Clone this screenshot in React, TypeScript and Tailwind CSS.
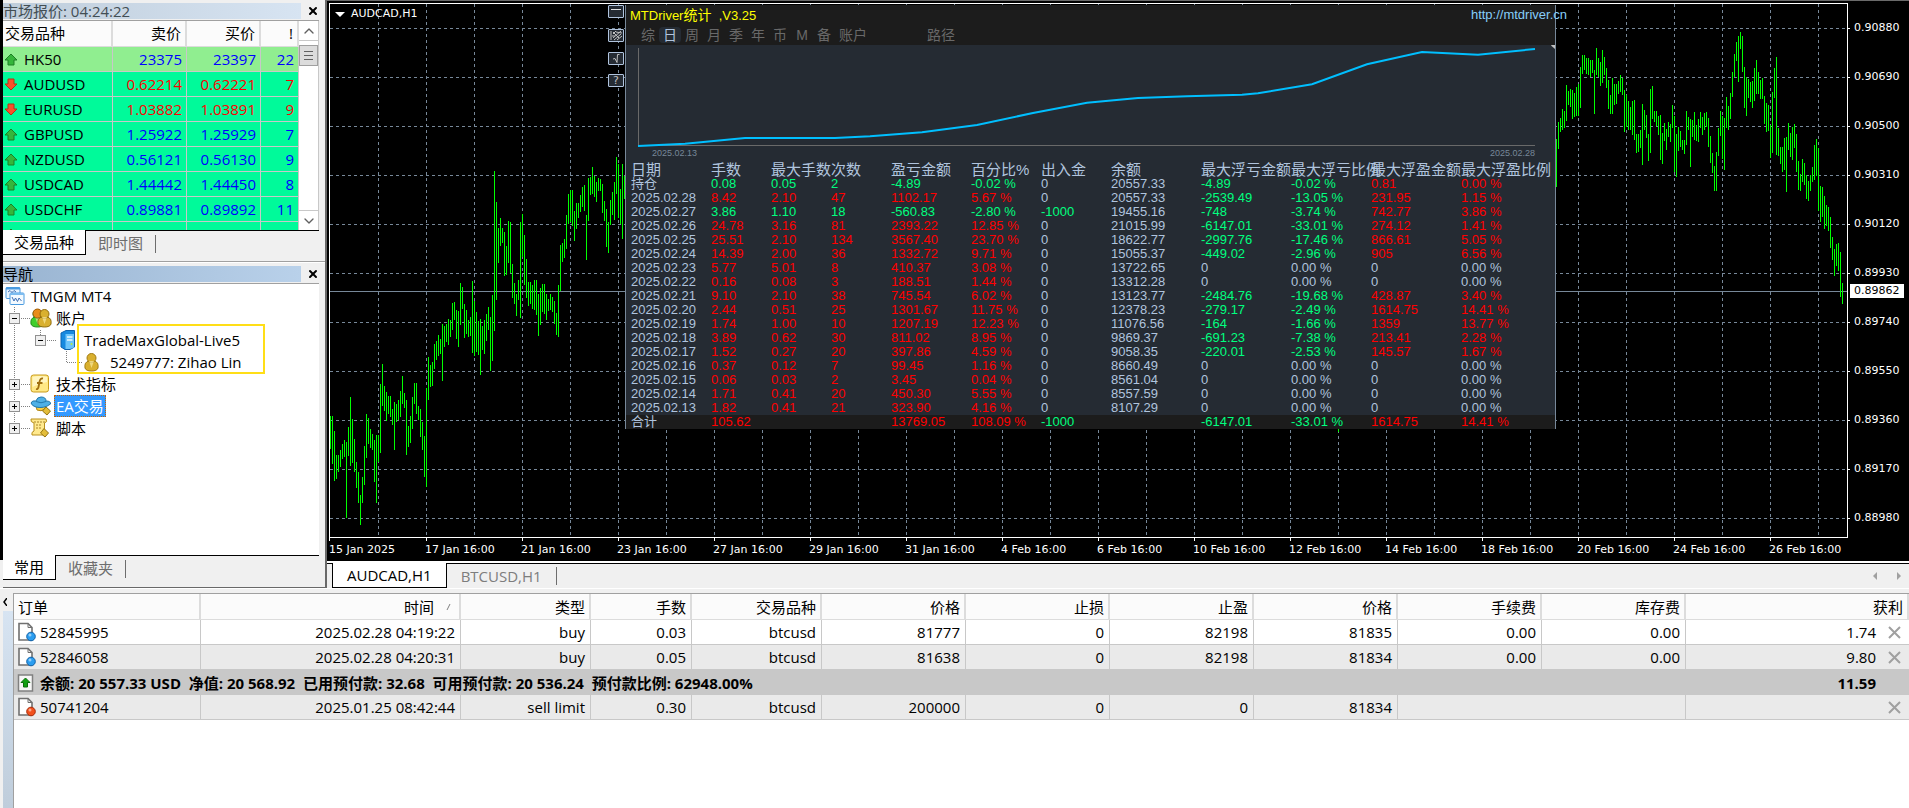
import type { ReactNode } from 'react';
import { ChevronDown, ChevronUp, X } from 'lucide-react';

const quotes = [
  { symbol: 'HK50', bid: '23375', ask: '23397', spread: 22, up: true },
  { symbol: 'AUDUSD', bid: '0.62214', ask: '0.62221', spread: 7, up: false },
  { symbol: 'EURUSD', bid: '1.03882', ask: '1.03891', spread: 9, up: false },
  { symbol: 'GBPUSD', bid: '1.25922', ask: '1.25929', spread: 7, up: true },
  { symbol: 'NZDUSD', bid: '0.56121', ask: '0.56130', spread: 9, up: true },
  { symbol: 'USDCAD', bid: '1.44442', ask: '1.44450', spread: 8, up: true },
  { symbol: 'USDCHF', bid: '0.89881', ask: '0.89892', spread: 11, up: true },
  { symbol: 'USDJPY', bid: '149.808', ask: '149.818', spread: 10, up: true },
];

const prices = [
  '0.90880', '0.90690', '0.90500', '0.90310', '0.90120', '0.89930',
  '0.89740', '0.89550', '0.89360', '0.89170', '0.88980',
];

const times = [
  '15 Jan 2025', '17 Jan 16:00', '21 Jan 16:00', '23 Jan 16:00',
  '27 Jan 16:00', '29 Jan 16:00', '31 Jan 16:00', '4 Feb 16:00',
  '6 Feb 16:00', '10 Feb 16:00', '12 Feb 16:00', '14 Feb 16:00',
  '18 Feb 16:00', '20 Feb 16:00', '24 Feb 16:00', '26 Feb 16:00',
];

// high/low of each bar, counted down from the top of the chart
const januaryBars = [
  [1125, 1214], [1125, 1254], [1165, 1300], [1230, 1295], [1230, 1275], [1217, 1262], [1200, 1240], [1190, 1235],
  [1195, 1400], [1155, 1233], [1073, 1260], [1133, 1252], [1187, 1276], [1250, 1318], [1276, 1360], [1338, 1418],
  [1290, 1360], [1206, 1310], [1119, 1238], [1130, 1200], [1160, 1210], [1173, 1216], [1190, 1302], [1176, 1360],
  [1176, 1250], [1038, 1225], [984, 1098], [1044, 1110], [1060, 1137], [1071, 1119], [1071, 1128], [1105, 1148],
  [1087, 1216], [1092, 1140], [1081, 1136], [1057, 1127], [1016, 1092], [1062, 1103], [1080, 1230], [1152, 1208],
  [1125, 1198], [1073, 1160], [1035, 1092], [1035, 1119], [1098, 1135], [1106, 1181], [1141, 1216], [1179, 1290],
  [1048, 1316], [965, 1081], [987, 1046], [979, 1044], [930, 998], [922, 973], [906, 963], [916, 957],
  [876, 1030], [881, 938], [876, 925], [862, 933], [865, 911], [819, 892], [816, 865], [838, 916],
  [841, 938], [765, 879], [776, 835], [822, 914], [838, 903], [865, 911], [857, 908], [760, 954],
  [814, 962], [843, 952], [868, 960], [862, 1014], [881, 946], [865, 957], [849, 922], [830, 892],
  [857, 1003], [798, 976], [462, 895], [546, 811], [616, 711], [589, 665], [616, 657], [627, 746],
  [665, 743], [597, 711], [600, 738], [714, 806], [765, 822], [795, 854], [757, 811], [600, 860],
  [579, 696], [635, 770], [700, 806], [762, 827], [762, 822], [770, 835], [757, 838], [757, 852],
  [795, 908], [779, 879], [768, 843], [768, 849], [795, 865], [808, 841], [795, 838], [803, 843],
  [814, 876], [846, 906], [770, 911], [662, 787], [657, 708], [646, 697], [581, 673], [524, 606],
  [514, 600], [514, 611], [570, 652], [549, 619], [549, 589], [527, 573], [506, 560], [500, 570],
  [581, 703], [481, 597], [479, 527], [451, 524], [476, 533], [492, 546], [481, 516], [484, 516],
  [497, 576], [543, 597], [565, 668], [600, 684], [541, 608], [519, 581], [492, 595], [424, 524],
  [443, 589], [511, 606], [443, 646], [476, 538],
];

const februaryBars = [
  [362, 489], [319, 389], [308, 345], [285, 339], [290, 335], [222, 316], [238, 274], [233, 279],
  [235, 311], [243, 306], [227, 303], [219, 303], [175, 282], [144, 193], [144, 183], [152, 193],
  [152, 196], [157, 201], [157, 191], [183, 298], [125, 196], [152, 201], [162, 225], [131, 217],
  [149, 196], [178, 230], [209, 285], [248, 298], [204, 298], [219, 274], [219, 272], [212, 245],
  [196, 240], [204, 248], [235, 345], [248, 332], [264, 340], [280, 340], [264, 353], [261, 366],
  [350, 400], [350, 397], [340, 387], [272, 431], [287, 340], [301, 361], [350, 421], [233, 400],
  [225, 311], [290, 319], [290, 329], [303, 353], [301, 418], [348, 429], [321, 368], [337, 392],
  [319, 358], [324, 371], [274, 335], [303, 450], [350, 463], [332, 395], [342, 384], [366, 392],
  [366, 402], [290, 379], [306, 340], [311, 436], [314, 358], [293, 366], [327, 368], [311, 371],
  [293, 335], [306, 353], [295, 340], [293, 332], [308, 384], [355, 426], [400, 452], [434, 499],
  [397, 499], [335, 408], [290, 355], [303, 416], [308, 444], [253, 335], [277, 340], [243, 311],
  [188, 253], [141, 201], [110, 160], [94, 214], [84, 128], [94, 188], [175, 282], [201, 303],
  [206, 256], [214, 266], [212, 282], [178, 264], [157, 246], [188, 246], [209, 258], [204, 258],
  [251, 324], [269, 345], [274, 342], [327, 413], [240, 400], [178, 256], [149, 405], [335, 408],
  [384, 429], [384, 450], [361, 444], [358, 502], [321, 392], [348, 410], [332, 418], [324, 387],
  [350, 450], [421, 497], [455, 499], [416, 476], [426, 484], [458, 520], [473, 526], [458, 499],
  [436, 476], [379, 471], [363, 460], [387, 551], [486, 580], [489, 567], [512, 599], [535, 591],
  [541, 604], [567, 648], [619, 680], [651, 721], [638, 695], [635, 709], [659, 776], [740, 795],
];

function barPath(bars: number[][], startX: number, pointsPerPixel: number) {
  return bars
    .map(([high, low], i) => {
      const x = startX + i * 2 + 0.5;
      return `M${x} ${Math.round(high / pointsPerPixel)}V${Math.round(low / pointsPerPixel)}`;
    })
    .join('');
}

const statColumns = [
  { title: '日期', width: 'w-[80px]' },
  { title: '手数', width: 'w-[60px]' },
  { title: '最大手数', width: 'w-[60px]' },
  { title: '次数', width: 'w-[60px]' },
  { title: '盈亏金额', width: 'w-[80px]' },
  { title: '百分比%', width: 'w-[70px]' },
  { title: '出入金', width: 'w-[70px]' },
  { title: '余额', width: 'w-[90px]' },
  { title: '最大浮亏金额', width: 'w-[90px]' },
  { title: '最大浮亏比例', width: 'w-[80px]' },
  { title: '最大浮盈金额', width: 'w-[90px]' },
  { title: '最大浮盈比例', width: '' },
];

const statRows = [
  ['持仓', '0.08', '0.05', '2', '-4.89', '-0.02 %', '0', '20557.33', '-4.89', '-0.02 %', '0.81', '0.00 %'],
  ['2025.02.28', '8.42', '2.10', '47', '1102.17', '5.67 %', '0', '20557.33', '-2539.49', '-13.05 %', '231.95', '1.15 %'],
  ['2025.02.27', '3.86', '1.10', '18', '-560.83', '-2.80 %', '-1000', '19455.16', '-748', '-3.74 %', '742.77', '3.86 %'],
  ['2025.02.26', '24.78', '3.16', '81', '2393.22', '12.85 %', '0', '21015.99', '-6147.01', '-33.01 %', '274.12', '1.41 %'],
  ['2025.02.25', '25.51', '2.10', '134', '3567.40', '23.70 %', '0', '18622.77', '-2997.76', '-17.46 %', '866.61', '5.05 %'],
  ['2025.02.24', '14.39', '2.00', '36', '1332.72', '9.71 %', '0', '15055.37', '-449.02', '-2.96 %', '905', '6.56 %'],
  ['2025.02.23', '5.77', '5.01', '8', '410.37', '3.08 %', '0', '13722.65', '0', '0.00 %', '0', '0.00 %'],
  ['2025.02.22', '0.16', '0.08', '3', '188.51', '1.44 %', '0', '13312.28', '0', '0.00 %', '0', '0.00 %'],
  ['2025.02.21', '9.10', '2.10', '38', '745.54', '6.02 %', '0', '13123.77', '-2484.76', '-19.68 %', '428.87', '3.40 %'],
  ['2025.02.20', '2.44', '0.51', '25', '1301.67', '11.75 %', '0', '12378.23', '-279.17', '-2.49 %', '1614.75', '14.41 %'],
  ['2025.02.19', '1.74', '1.00', '10', '1207.19', '12.23 %', '0', '11076.56', '-164', '-1.66 %', '1359', '13.77 %'],
  ['2025.02.18', '3.89', '0.62', '30', '811.02', '8.95 %', '0', '9869.37', '-691.23', '-7.38 %', '213.41', '2.28 %'],
  ['2025.02.17', '1.52', '0.27', '20', '397.86', '4.59 %', '0', '9058.35', '-220.01', '-2.53 %', '145.57', '1.67 %'],
  ['2025.02.16', '0.37', '0.12', '7', '99.45', '1.16 %', '0', '8660.49', '0', '0.00 %', '0', '0.00 %'],
  ['2025.02.15', '0.06', '0.03', '2', '3.45', '0.04 %', '0', '8561.04', '0', '0.00 %', '0', '0.00 %'],
  ['2025.02.14', '1.71', '0.41', '20', '450.30', '5.55 %', '0', '8557.59', '0', '0.00 %', '0', '0.00 %'],
  ['2025.02.13', '1.82', '0.41', '21', '323.90', '4.16 %', '0', '8107.29', '0', '0.00 %', '0', '0.00 %'],
];

const statTotal = ['合计', '105.62', '', '', '13769.05', '108.09 %', '-1000', '', '-6147.01', '-33.01 %', '1614.75', '14.41 %'];

// losing rows and drawdowns are green, winning ones red, as on Chinese exchanges
function statColor(row: string[], column: number) {
  if (column === 0 || column === 7) return 'text-[#b0c4de]';
  if (column < 6) return row[4].startsWith('-') ? 'text-[#00ff7f]' : 'text-[#ff0000]';
  if (row[column].startsWith('-')) return 'text-[#00ff7f]';
  if (column === 6 || row[8] === '0') return 'text-[#b0c4de]';
  return 'text-[#ff0000]';
}

const orderColumns = [
  { title: '订单', width: 'w-[187px]' },
  { title: '时间', width: 'w-[260px]' },
  { title: '类型', width: 'w-[130px]' },
  { title: '手数', width: 'w-[101px]' },
  { title: '交易品种', width: 'w-[130px]' },
  { title: '价格', width: 'w-[144px]' },
  { title: '止损', width: 'w-[144px]' },
  { title: '止盈', width: 'w-[144px]' },
  { title: '价格', width: 'w-[144px]' },
  { title: '手续费', width: 'w-[144px]' },
  { title: '库存费', width: 'w-[144px]' },
  { title: '获利', width: '' },
];

const orders = [
  ['52845995', '2025.02.28 04:19:22', 'buy', '0.03', 'btcusd', '81777', '0', '82198', '81835', '0.00', '0.00', '1.74'],
  ['52846058', '2025.02.28 04:20:31', 'buy', '0.05', 'btcusd', '81638', '0', '82198', '81834', '0.00', '0.00', '9.80'],
];

const pending = ['50741204', '2025.01.25 08:42:44', 'sell limit', '0.30', 'btcusd', '200000', '0', '0', '81834'];

function QuoteArrow({ up }: { up: boolean }) {
  return (
    <svg viewBox="0 0 14 13" className={up ? 'h-[13px] w-[14px] shrink-0' : 'h-[13px] w-[14px] shrink-0 rotate-180'}>
      <path
        d="M7 1 13 7H10V12H4V7H1Z"
        fill={up ? '#35b53b' : '#f9502a'}
        stroke={up ? '#1c7f24' : '#b53213'}
        strokeLinejoin="round"
      />
    </svg>
  );
}

function PanelTitle({ title, active }: { title: string; active?: boolean }) {
  return (
    <div className="flex h-4 items-center">
      <h2
        className={
          active
            ? 'h-4 flex-1 bg-linear-to-r from-[#99b4d1] to-[#b9d1ea] text-[15px] leading-4 text-black'
            : 'h-4 flex-1 bg-linear-to-r from-[#bfcddb] to-[#d7e4f2] text-[15px] leading-4 text-[#434e54]'
        }
      >
        {title}
      </h2>
      <button aria-label="关闭" className="flex h-4 w-6 items-center justify-center text-black">
        <X className="h-3 w-3" strokeWidth={4} />
      </button>
    </div>
  );
}

function BottomTabs({ tabs }: { tabs: string[] }) {
  return (
    <div className="flex h-[25px] items-start border-t border-black bg-[#f0f0f0] text-[15px] leading-6">
      <button className="-mt-px h-[25px] border-r border-b border-black bg-white px-[11px] text-black">{tabs[0]}</button>
      <button className="h-6 px-3 text-[#6d6d6d]">{tabs[1]}</button>
      <span className="mt-1 h-[18px] w-px bg-[#6d6d6d]" />
    </div>
  );
}

function MarketWatch() {
  return (
    <section className="border-b border-[#a0a0a0] pt-[3px] pb-1.5">
      <PanelTitle title="市场报价: 04:24:22" />
      <div className="mt-px mr-1.5 flex h-[210px] overflow-hidden border-t border-[#a0a0a0] bg-white">
        <table className="h-px w-[296px] shrink-0 table-fixed border-separate border-spacing-0 text-[15px]">
          <thead>
            <tr className="h-[26px] bg-[#fbfbfb] text-black">
              <th className="w-[110px] border-r-2 border-b border-[#dcdcdc] p-0 pl-0.5 text-left font-normal">交易品种</th>
              <th className="w-[74px] border-r-2 border-b border-[#dcdcdc] p-0 pr-1 text-right font-normal">卖价</th>
              <th className="w-[74px] border-r-2 border-b border-[#dcdcdc] p-0 pr-1 text-right font-normal">买价</th>
              <th className="w-[38px] border-r-2 border-b border-[#dcdcdc] p-0 pr-1 text-right font-normal">!</th>
            </tr>
          </thead>
          <tbody>
            {quotes.map((quote, i) => (
              <tr
                key={quote.symbol}
                className={[
                  'h-[25px] leading-6',
                  i === 0 ? 'bg-[#90ee90]' : 'bg-[#00fa9a]',
                  quote.up ? 'text-[#0000ff]' : 'text-[#ff0000]',
                ].join(' ')}
              >
                <td className="border-r border-b border-[#c8c8c8] p-0 pl-px text-black">
                  <span className="flex items-center gap-1.5">
                    <QuoteArrow up={quote.up} />
                    {quote.symbol}
                  </span>
                </td>
                <td className="border-r border-b border-[#c8c8c8] p-0 pr-1 text-right">{quote.bid}</td>
                <td className="border-r border-b border-[#c8c8c8] p-0 pr-1 text-right">{quote.ask}</td>
                <td className="border-r border-b border-[#c8c8c8] p-0 pr-1 text-right">{quote.spread}</td>
              </tr>
            ))}
          </tbody>
        </table>
        <div className="flex flex-1 flex-col border-r border-[#c8c8c8] bg-white text-[#606060]">
          <button aria-label="向上滚动" className="flex h-5 items-center justify-center border-b border-[#c8c8c8]">
            <ChevronUp className="h-4 w-4" />
          </button>
          <div className="flex-1 pt-1">
            <div className="flex h-[21px] flex-col items-center justify-center gap-[3px] border border-[#a0a0a0] bg-[#dcdcdc]">
              <span className="h-px w-[9px] bg-[#606060]" />
              <span className="h-px w-[9px] bg-[#606060]" />
              <span className="h-px w-[9px] bg-[#606060]" />
            </div>
          </div>
          <button aria-label="向下滚动" className="flex h-5 items-center justify-center border-t border-[#c8c8c8]">
            <ChevronDown className="h-4 w-4" />
          </button>
        </div>
      </div>
      <div className="mr-1.5">
        <BottomTabs tabs={['交易品种', '即时图']} />
      </div>
    </section>
  );
}

function PersonShape({ x, color, edge }: { x: number; color: string; edge: string }) {
  return (
    <g transform={`translate(${x} 0)`} fill={color} stroke={edge}>
      <path d="M1 16Q0 10 5 9H10Q15 10 14 16Q13 19 7.500 19Q2 19 1 16Z" />
      <circle cx="7.5" cy="6" r="4.500" />
      <path d="M5 9 7.500 16 10 9" fill="#fff3b0" fillOpacity="0.6" stroke="none" />
    </g>
  );
}

function RootIcon() {
  return (
    <svg viewBox="0 0 20 20" className="h-5 w-5">
      <rect x="1" y="1.500" width="14" height="11" rx="1" fill="#e8f4ff" stroke="#4a9be0" />
      <path d="M1 2.500H15" stroke="#4a9be0" strokeWidth="2" />
      <rect x="5" y="7" width="14" height="11.500" rx="1" fill="#f4faff" stroke="#4a9be0" />
      <path d="M5 8H19" stroke="#7cbcf0" strokeWidth="2" />
      <path d="M7 11 9 15 10.500 12 12.500 15.500 14 12 16.500 15" fill="none" stroke="#3f6fb5" />
      <path d="M3 6 5 4.500 7 6.500 9 4.500 11 6" fill="none" stroke="#3f6fb5" />
    </svg>
  );
}

function AccountsIcon() {
  return (
    <svg viewBox="0 0 22 20" className="h-5 w-[22px]">
      <PersonShape x={0} color="#3fce2c" edge="#1f8a1a" />
      <circle cx="7.500" cy="5.500" r="4.500" fill="#e88d1a" stroke="#a65f0c" />
      <PersonShape x={7} color="#d9b02f" edge="#8f6c0c" />
    </svg>
  );
}

function ServerIcon() {
  return (
    <svg viewBox="0 0 16 20" className="ml-1 h-5 w-4">
      <path d="M1 3 6 .500H14.500V17L10 19.500H5L1 17Z" fill="#1689e0" stroke="#0d62b0" />
      <path d="M5.500 4H14V17.500L10 19H5.500Z" fill="#6cc4fb" />
      <path d="M7 7H12.500M7 10H12.500" stroke="#eaf8ff" strokeWidth="1.500" />
      <circle cx="11.500" cy="14" r="1" fill="#b6f23c" />
    </svg>
  );
}

function UserIcon() {
  return (
    <svg viewBox="0 0 16 20" className="h-5 w-4">
      <PersonShape x={0} color="#d9b02f" edge="#a27b10" />
    </svg>
  );
}

function IndicatorIcon() {
  return (
    <svg viewBox="0 0 20 20" className="h-5 w-5">
      <rect x="1" y="1" width="17.500" height="17" rx="2.500" fill="#ffe885" stroke="#c99b1c" />
      <path d="M2.500 3Q10 1 17 3V8Q10 9 2.500 13Z" fill="#fff5c0" />
      <path d="M13 4.500Q10 4 9.500 8L8.500 13Q8 15.500 6 15M7 9H12.500" fill="none" stroke="#a06f10" strokeWidth="1.800" />
    </svg>
  );
}

function ExpertIcon() {
  return (
    <svg viewBox="0 0 22 20" className="h-5 w-[22px]">
      <path d="M6 10 7 14Q11 16 15 13L16 9Z" fill="#f7cd45" stroke="#b08513" />
      <path d="M1 7Q2 4 6 5Q7 1 11 1Q16 1 16 5Q21 5 20.500 8Q14 13 6 11Q2 10 1 7Z" fill="#4fb0e6" stroke="#2278ac" />
      <path d="M6 5.500Q11 8 16 5.500" fill="none" stroke="#2278ac" />
      <path d="M16 11 20.500 15 17 19 12.500 15Z" fill="#e3bd3a" stroke="#96740f" />
    </svg>
  );
}

function ScriptIcon() {
  return (
    <svg viewBox="0 0 20 20" className="h-5 w-5">
      <path d="M1 1H16Q18 4 14.500 5V12L13 17H2Q1 14 4 13V5Q0 4 1 1Z" fill="#ffe98e" stroke="#b98f1b" />
      <path d="M6 7H12M6 10H11M4 4H15" stroke="#a8842a" strokeDasharray="2 1" />
      <path d="M14 10.500 18.500 15 15 19 10.500 15Z" fill="#e3bd3a" stroke="#96740f" />
    </svg>
  );
}

function Expander({ open }: { open: boolean }) {
  return (
    <button
      aria-label={open ? '折叠' : '展开'}
      className="flex h-[11px] w-[11px] items-center justify-center border border-[#919191] bg-[#f0f0f0]"
    >
      <svg viewBox="0 0 5 5" className="h-[5px] w-[5px]" stroke="#000">
        <path d={open ? 'M0 2.5H5' : 'M0 2.5H5M2.5 0V5'} />
      </svg>
    </button>
  );
}

function TreeRow({ icon, indent, open, children }: { icon: ReactNode; indent: string; open?: boolean; children: ReactNode }) {
  return (
    <li className={`flex h-[22px] items-center ${indent}`}>
      {open !== undefined && (
        <span className="mr-2.5">
          <Expander open={open} />
        </span>
      )}
      <span className="w-[22px]">{icon}</span>
      <span className="ml-1 whitespace-nowrap">{children}</span>
    </li>
  );
}

function Navigator() {
  return (
    <section className="flex flex-1 flex-col border-t border-white pt-[3px]">
      <PanelTitle title="导航" active />
      <div className="relative mt-px mr-1.5 flex-1 border-t border-[#a0a0a0] bg-white pt-px">
        <svg className="absolute top-0 left-0 h-[160px] w-[90px]" viewBox="0 0 90 160" fill="none" stroke="#808080" strokeDasharray="1 1">
          <path d="M11.500 23V145M18 34.500H28M37.500 46V56M44 56.500H54M63.500 67V78.500H80M18 100.500H28M18 122.500H28M18 144.500H28" />
        </svg>
        <ul className="relative text-[15px] leading-[22px] text-black">
          <TreeRow icon={<RootIcon />} indent="pl-0.5">TMGM MT4</TreeRow>
          <TreeRow icon={<AccountsIcon />} indent="pl-1.5" open>账户</TreeRow>
          <TreeRow icon={<ServerIcon />} indent="pl-8" open>
            <span className="pl-0.5">TradeMaxGlobal-Live5</span>
          </TreeRow>
          <TreeRow icon={<UserIcon />} indent="pl-[81px]">5249777: Zihao Lin</TreeRow>
          <TreeRow icon={<IndicatorIcon />} indent="pl-1.5" open={false}>技术指标</TreeRow>
          <TreeRow icon={<ExpertIcon />} indent="pl-1.5" open={false}>
            <span className="-ml-0.5 block border border-dotted border-[#c86400] bg-[#3399ff] px-px leading-5 text-white">
              EA交易
            </span>
          </TreeRow>
          <TreeRow icon={<ScriptIcon />} indent="pl-1.5" open={false}>脚本</TreeRow>
        </ul>
        <div className="pointer-events-none absolute top-10 left-[74px] h-[50px] w-[188px] border-2 border-[#ffde17]" />
      </div>
      <div className="mr-1.5 h-8">
        <BottomTabs tabs={['常用', '收藏夹']} />
      </div>
    </section>
  );
}

function StatsPanel() {
  return (
    <div className="absolute top-1 left-[298px] h-[424px] w-[931px] border-x border-b border-[#778899] bg-[#252b33] font-['Liberation_Sans','Noto_Sans_CJK_SC',sans-serif] text-[13px] text-[#b0c4de]">
      <div className="h-10 bg-[#1c1c1c]">
        <div className="flex h-5 items-center justify-between pl-1">
          <h2 className="whitespace-pre text-[#ffff00]">
            MTDriver<span className="text-sm">统计</span>  ,V3.25
          </h2>
          <a href="http://mtdriver.cn" className="relative -right-3 text-[#87cefa]">
            http://mtdriver.cn
          </a>
        </div>
        <nav className="flex h-5 items-center pl-[11px] text-sm leading-4 text-[#696969]">
          {['综', '日', '周', '月', '季', '年', '币', 'M', '备'].map((tab) => (
            <button key={tab} className={tab === '日' ? 'w-[22px] rounded-sm bg-[#252b33] text-[#b0c4de]' : 'w-[22px]'}>
              {tab}
            </button>
          ))}
          <button className="ml-1">账户</button>
          <button className="ml-[60px]">路径</button>
        </nav>
      </div>
      <div className="h-[117px]">
        <svg viewBox="626 44 929 104" className="h-[104px] w-[929px]" fill="none">
          <path d="M638.500 47V144.500H1535" stroke="#696969" />
          <path
            d="M638 145 685 142.700 745 137H835L870 135.300 922 131.300 977 124 1033 112 1087 101.700 1138 97 1187 95.300 1242 93.700 1258 92.300 1312 83.300 1367 63.300 1422 51 1478 53.700 1535 48"
            stroke="#00bfff"
            strokeWidth="2"
          />
          <path d="M1551 44.500 1555 41V48Z" fill="#c0c0c0" />
        </svg>
        <div className="flex justify-between pr-5 pl-[26px] text-[9px] leading-[9px] text-[#778899]">
          <span>2025.02.13</span>
          <span>2025.02.28</span>
        </div>
      </div>
      <table className="w-full table-fixed border-separate border-spacing-0 leading-[14px]">
        <thead>
          <tr className="h-[15px] text-[15px] leading-[15px] whitespace-nowrap">
            {statColumns.map((column) => (
              <th key={column.title} className={`${column.width} p-0 pl-[5px] text-left font-normal`}>
                {column.title}
              </th>
            ))}
          </tr>
        </thead>
        <tbody>
          {statRows.map((row) => (
            <tr key={row[0]} className="h-[14px] whitespace-nowrap">
              {row.map((value, i) => (
                <td key={i} className={`p-0 pl-[5px] ${statColor(row, i)}`}>{value}</td>
              ))}
            </tr>
          ))}
        </tbody>
        <tfoot>
          <tr className="h-[14px] bg-[#1c1c1c] whitespace-nowrap">
            {statTotal.map((value, i) => (
              <td key={i} className={`p-0 pl-[5px] ${statColor(statTotal, i)}`}>{value}</td>
            ))}
          </tr>
        </tfoot>
      </table>
    </div>
  );
}

function ChartButtons() {
  const button = 'flex h-[13px] w-4 items-center justify-center rounded-[1px] border border-[#b0c4de] bg-[#252b33]';
  return (
    <div className="absolute top-1 left-[281px] flex flex-col text-[#c0c0c0]">
      <button aria-label="最小化" className={`${button} mb-[11px]`}>
        <span className="mb-1 h-px w-2.5 bg-[#e0e0e0]" />
      </button>
      <button aria-label="隐藏" className={`${button} mb-2.5`}>
        <svg viewBox="0 0 12 11" className="h-[11px] w-3" stroke="#c0c0c0" fill="none">
          <path d="M1 1V10M3 4 6 1M3 8 11 1M4 10 11 4M7 10 12 6M3 2 9 8M6 2 12 3M2 6 5 6" />
        </svg>
      </button>
      <button aria-label="启用" className={`${button} mb-[9px]`}>
        <svg viewBox="0 0 10 9" className="h-[9px] w-2.5" stroke="#c0c0c0" fill="none">
          <path d="M2 5 4 4.500 6 8.500 6.500 0.500H8.500" />
        </svg>
      </button>
      <button className={`${button} text-[11px] leading-[11px]`}>?</button>
    </div>
  );
}

function Chart() {
  const gridX = Array.from({ length: 31 }, (_, i) => 378.5 + i * 48);
  return (
    <div className="relative h-[561px] border-t border-[#6a6a6a] bg-black pt-0.5 pl-0.5 font-['DejaVu_Sans',sans-serif] text-[11px] text-white">
      <div className="flex h-[535px]">
        <svg viewBox="329 3 1519 535" preserveAspectRatio="none" className="h-[535px] min-w-0 flex-1" fill="none">
          <g stroke="#778899" strokeDasharray="3 3">
            {gridX.map((x) => (
              <path key={x} d={`M${x} 4V537`} />
            ))}
            {prices.map((price, i) => (
              <path key={price} d={`M330 ${28.5 + i * 49}H1847`} />
            ))}
          </g>
          <path d="M330 291.500H1847" stroke="#778899" />
          <g stroke="#00ff00">
            <path d={barPath(januaryBars, 330, 2.703)} />
            <path d={barPath(februaryBars, 1556, 2.613)} />
            <path d="M1338.500 420V432" />
          </g>
          <rect x="329.500" y="3.500" width="1518" height="534" stroke="#fff" />
        </svg>
        <div className="relative w-[61px] pt-px">
          {prices.map((price) => (
            <div key={price} className="flex h-[49px] items-center gap-1">
              <span className="h-px w-0.5 bg-white" />
              {price}
            </div>
          ))}
          <span className="absolute top-[281px] left-0.5 h-[14px] w-[54px] bg-white pl-1 leading-[14px] text-black">0.89862</span>
        </div>
      </div>
      <div className="flex overflow-hidden whitespace-nowrap">
        {times.map((time, i) => (
          <div key={time} className="w-24 shrink-0">
            <span className={i === 0 ? 'block h-[3px] w-px bg-white' : 'ml-px block h-[3px] w-px bg-white'} />
            <span className="block leading-[18px]">{time}</span>
          </div>
        ))}
      </div>
      <div className="absolute top-1.5 left-2 flex items-center gap-1.5 leading-[14px]">
        <svg viewBox="0 0 10 5" className="h-[5px] w-2.5" fill="#fff">
          <path d="M0 0H10L5 5Z" />
        </svg>
        AUDCAD,H1
      </div>
      <ChartButtons />
      <StatsPanel />
    </div>
  );
}

function ChartTabs() {
  return (
    <div className="border-t-2 border-white">
      <div className="flex h-[25px] items-start border-t border-black pl-[5px] text-[15px] leading-6">
        <button className="-mt-px h-[25px] border-x border-b border-black bg-white px-3.5 text-black">AUDCAD,H1</button>
        <button className="h-6 px-3.5 text-[#7d7d7d]">BTCUSD,H1</button>
        <span className="mt-[3px] h-[18px] w-px bg-[#6d6d6d]" />
        <div className="ml-auto flex h-6 items-center gap-5 pr-2">
          <button aria-label="向左">
            <svg viewBox="0 0 4 8" className="h-2 w-1" fill="#a0a0a0"><path d="M4 0V8L0 4Z" /></svg>
          </button>
          <button aria-label="向右">
            <svg viewBox="0 0 4 8" className="h-2 w-1" fill="#a0a0a0"><path d="M0 0V8L4 4Z" /></svg>
          </button>
        </div>
      </div>
    </div>
  );
}

function OrderIcon({ sell }: { sell?: boolean }) {
  return (
    <svg viewBox="0 0 19 20" className="h-5 w-[19px] shrink-0">
      <path d="M2 1.500H11L15 5.500V18H2Z" fill="#fff" stroke="#707070" strokeWidth="1.600" />
      <path d="M11 1.500V5.500H15" fill="none" stroke="#707070" />
      <circle cx="14" cy="14.500" r="4.300" fill={sell ? '#f2501c' : '#2a9df0'} stroke={sell ? '#a82c0a' : '#1062a8'} />
      <circle cx="13" cy="13" r="1.500" fill="#fff" fillOpacity="0.5" />
    </svg>
  );
}

function CloseOrder() {
  return (
    <button aria-label="平仓" className="ml-2.5 flex h-4 w-4 items-center justify-center text-[#a0a0a0]">
      <svg viewBox="0 0 13 13" className="h-[13px] w-[13px]" stroke="currentColor" strokeWidth="2"><path d="M1 1 12 12M12 1 1 12" /></svg>
    </button>
  );
}

const orderCell = 'border-r border-b border-[#c8c8c8] py-0 pr-[5px] pl-1 text-right';

function Terminal() {
  return (
    <section className="flex flex-1 border-t border-white pt-1">
      <div className="flex w-[13px] flex-col pl-[3px]">
        <button aria-label="收起" className="flex h-[18px] items-center">
          <svg viewBox="0 0 4 8" className="h-2 w-1" fill="none" stroke="#000" strokeWidth="1.500"><path d="M4 0 1 4 4 8" /></svg>
        </button>
        <div className="flex-1 bg-linear-to-b from-[#d7e4f2] to-[#bfcddb]" />
      </div>
      <div className="flex-1 border-t border-l border-[#a0a0a0] bg-white">
        <table className="w-full table-fixed border-separate border-spacing-0 text-[15px] leading-6 whitespace-nowrap text-black">
          <thead>
            <tr className="h-[26px] bg-[#fbfbfb]">
              {orderColumns.map((column, i) => (
                <th
                  key={i}
                  className={[
                    'border-r-2 border-b border-[#dcdcdc] py-0 pr-1 pl-1 font-normal',
                    column.width,
                    i === 0 ? 'text-left' : 'text-right',
                  ].join(' ')}
                >
                  {column.title === '时间' ? (
                    <span className="flex items-center justify-end gap-3 pr-1">
                      {column.title}
                      <svg viewBox="0 0 5 8" className="h-2 w-[5px]" stroke="#808080"><path d="M1 7 4 1" /></svg>
                    </span>
                  ) : (
                    column.title
                  )}
                </th>
              ))}
            </tr>
          </thead>
          <tbody>
            {orders.map((order, row) => (
              <tr key={order[0]} className={row % 2 ? 'h-[25px] bg-[#eaeaea]' : 'h-[25px] bg-white'}>
                <td className="border-r border-b border-[#c8c8c8] py-0 pr-0 pl-[3px]">
                  <span className="flex items-center gap-1"><OrderIcon />{order[0]}</span>
                </td>
                {order.slice(1, 11).map((value, i) => (
                  <td key={i} className={orderCell}>{value}</td>
                ))}
                <td className="border-b border-[#c8c8c8] py-0 pr-[7px]">
                  <span className="flex items-center justify-end">{order[11]}<CloseOrder /></span>
                </td>
              </tr>
            ))}
            <tr className="h-[25px] bg-[#c8c8c8] font-bold">
              <td colSpan={11} className="py-0 pr-0 pl-[3px]">
                <span className="flex items-center gap-1">
                  <svg viewBox="0 0 19 20" className="h-5 w-[19px] shrink-0">
                    <rect x="1.500" y="2" width="14" height="16" fill="#f6f6f6" stroke="#808080" strokeWidth="1.500" />
                    <path d="M8.500 5 13 9.500H10.500V14H6.500V9.500H4Z" fill="#12a012" stroke="#0a6e0a" />
                  </svg>
                  <span className="whitespace-pre">
                    余额: 20 557.33 USD  净值: 20 568.92  已用预付款: 32.68  可用预付款: 20 536.24  预付款比例: 62948.00%
                  </span>
                </span>
              </td>
              <td className="py-0 pr-[33px] text-right">11.59</td>
            </tr>
            <tr className="h-[25px] bg-[#eaeaea]">
              <td className="border-r border-b border-[#c8c8c8] py-0 pr-0 pl-[3px]">
                <span className="flex items-center gap-1"><OrderIcon sell />{pending[0]}</span>
              </td>
              {pending.slice(1).map((value, i) => (
                <td key={i} className={orderCell}>{value}</td>
              ))}
              <td colSpan={2} className={orderCell} />
              <td className="border-b border-[#c8c8c8] py-0 pr-[7px]">
                <span className="flex justify-end"><CloseOrder /></span>
              </td>
            </tr>
          </tbody>
        </table>
      </div>
    </section>
  );
}

export default function App() {
  return (
    <div className="flex min-h-screen flex-col overflow-hidden bg-[#f0f0f0] font-['Open_Sans','Noto_Sans_CJK_SC',sans-serif]">
      <div className="flex">
        <aside className="flex w-[327px] shrink-0">
          <div className="mb-7 w-[3px] bg-black" />
          <div className="flex flex-1 flex-col border-r-2 border-b border-[#696969]">
            <MarketWatch />
            <Navigator />
          </div>
        </aside>
        <main className="min-w-0 flex-1">
          <Chart />
          <ChartTabs />
        </main>
      </div>
      <Terminal />
    </div>
  );
}
